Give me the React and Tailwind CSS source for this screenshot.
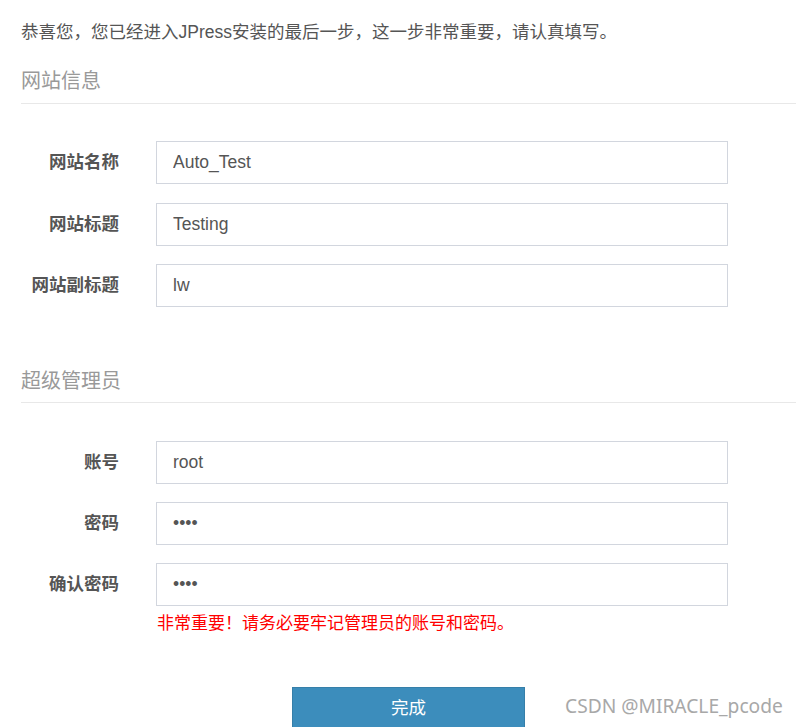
import React from "react";

const font = "font-['Liberation_Sans','Noto_Sans_CJK_SC',sans-serif]";

function Field({ label, value, type = "text" }) {
  return (
    <div className="flex items-center">
      <label className="w-[98px] shrink-0 text-right text-[17.5px] font-bold text-[#555]">
        {label}
      </label>
      <input
        type={type}
        defaultValue={value}
        className={`ml-[37px] h-[43px] w-[572px] border border-[#d2d6de] bg-white px-[16px] text-[17.5px] text-[#555] outline-none ${font}`}
      />
    </div>
  );
}

function SectionTitle({ children, pb }) {
  return (
    <div className={`border-b border-[#e8e8e8] ${pb}`}>
      <h3 className="text-[20px] leading-[28px] font-normal text-[#999]">{children}</h3>
    </div>
  );
}

export default function App() {
  return (
    <div className={`relative h-[727px] w-[796px] overflow-hidden bg-white pl-[21px] ${font}`}>
      <p className="pt-[20px] text-[17.5px] leading-[24px] text-[#555]">
        恭喜您，您已经进入JPress安装的最后一步，这一步非常重要，请认真填写。
      </p>

      <div className="mt-[23px]">
        <SectionTitle pb="pb-[8px]">网站信息</SectionTitle>
      </div>

      <div className="mt-[37px] flex flex-col gap-[18.5px]">
        <Field label="网站名称" value="Auto_Test" />
        <Field label="网站标题" value="Testing" />
        <Field label="网站副标题" value="lw" />
      </div>

      <div className="mt-[60px]">
        <SectionTitle pb="pb-[7px]">超级管理员</SectionTitle>
      </div>

      <div className="mt-[38px] flex flex-col gap-[18px]">
        <Field label="账号" value="root" />
        <Field label="密码" value="1234" type="password" />
        <Field label="确认密码" value="1234" type="password" />
      </div>

      <p className="mt-[6px] ml-[136px] text-[17px] leading-[24px] text-[#f00]">
        非常重要！请务必要牢记管理员的账号和密码。
      </p>

      <div className="mt-[51px] ml-[271px]">
        <button className="h-[42px] w-[233px] border border-[#367fa9] bg-[#3c8dbc] text-[17.5px] text-white">
          完成
        </button>
      </div>

      <span className="absolute left-[565px] top-[692px] font-['Noto_Sans',sans-serif] text-[19.2px] leading-[27px] text-[#a8a8a8]">
        CSDN @MIRACLE_pcode
      </span>
    </div>
  );
}
